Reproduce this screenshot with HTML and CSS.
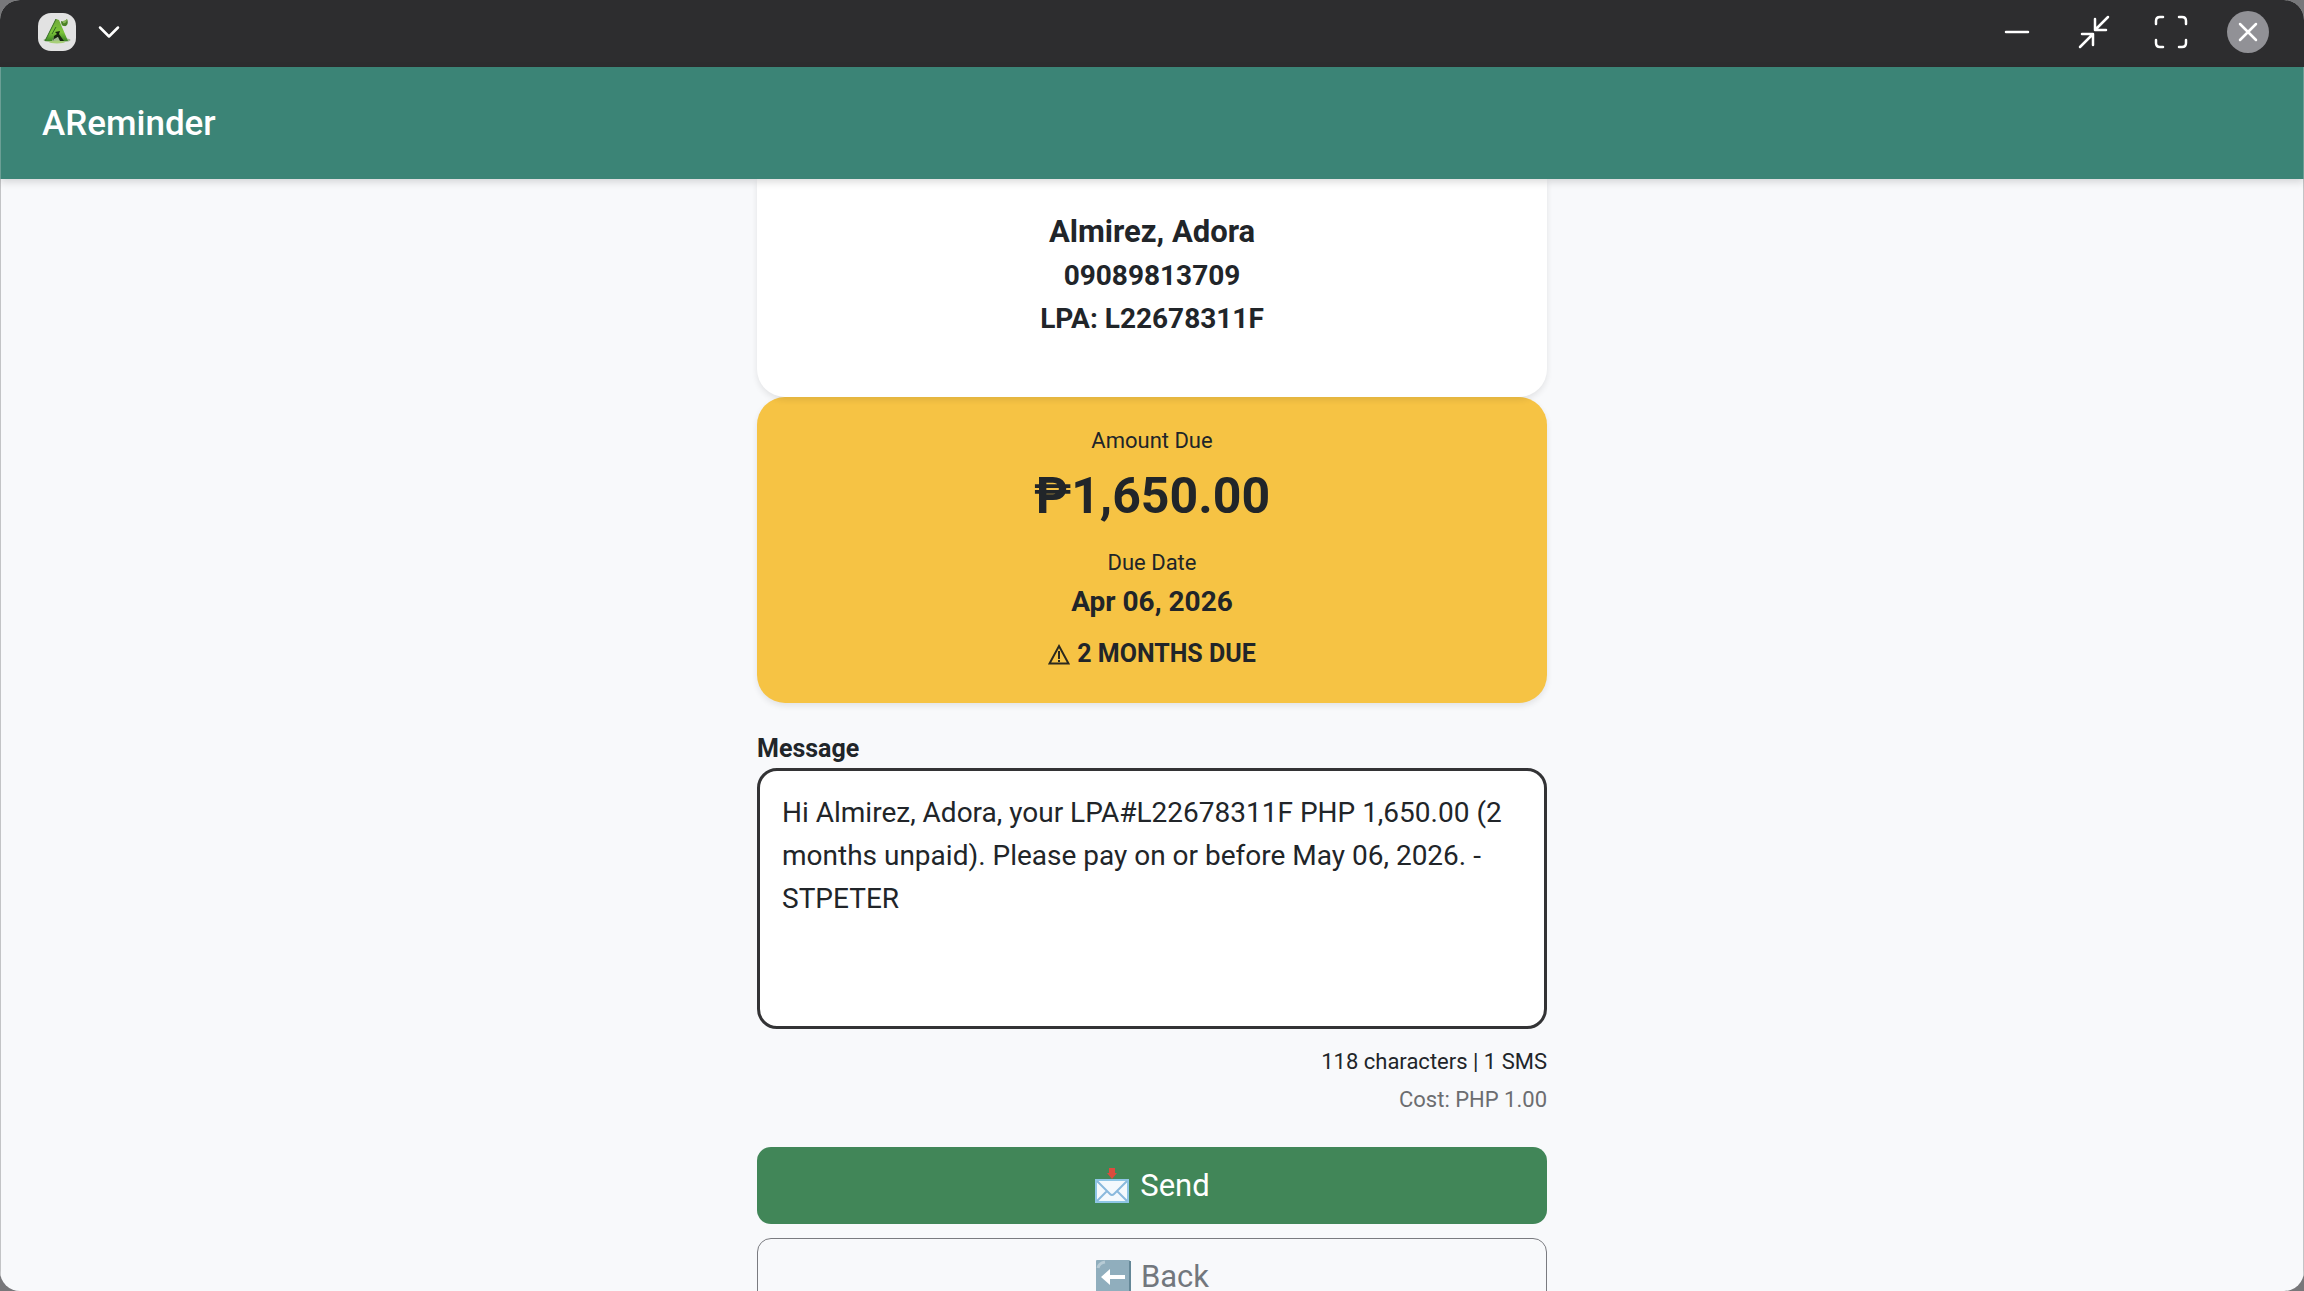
FILE: index.html
```html
<!DOCTYPE html>
<html lang="en">
<head>
<meta charset="utf-8">
<meta name="viewport" content="width=device-width, initial-scale=1">
<title>AReminder</title>
<link rel="stylesheet" href="styles.css">
</head>
<body>
<div class="window">
  <header class="titlebar">
    <div class="titlebar-group titlebar-app">
      <svg class="app-logo" viewBox="0 0 38 38" aria-hidden="true">
        <defs>
          <linearGradient id="leaf" x1="0" y1="0" x2="0" y2="1">
            <stop offset="0" stop-color="#6fa83a"/>
            <stop offset=".6" stop-color="#7cc63a"/>
            <stop offset="1" stop-color="#3d8526"/>
          </linearGradient>
        </defs>
        <rect width="38" height="38" rx="13" fill="#e2e2e2"/>
        <ellipse cx="19" cy="27" rx="13.500" ry="2.500" fill="#9fb98f"/>
        <ellipse cx="19" cy="29" rx="8" ry="1.500" fill="#a8cf78"/>
        <path d="M18 6 21 7 30 28H23L21 23 16 24 14 28H7Z" fill="url(#leaf)"/>
        <path d="M18 6 7 28M18 14 14 21" stroke="#326b22" stroke-width="1" fill="none"/>
        <path d="M17 19 22 18 21 21 26 28H22L20 24 16 26 15 28 16 23 19 21Z" fill="#16260f"/>
        <path d="M23 8C25 9 27 8 29 6 31 10 29 14 26 13 24 13 23 11 23 8Z" fill="#4b8126"/>
        <path d="M25 8C26 8 28 7 29 6 29 9 27 11 25 10Z" fill="#8ab75a"/>
      </svg>
      <button class="icon-button" type="button" aria-label="Window menu">
        <svg width="28" height="28" viewBox="0 0 28 28"><path d="M5 9.500 14 18.500 23 9.500"/></svg>
      </button>
    </div>
    <div class="titlebar-group titlebar-controls">
      <button class="icon-button" type="button" aria-label="Minimize">
        <svg width="42" height="42" viewBox="0 0 42 42"><path d="M10 21H32"/></svg>
      </button>
      <button class="icon-button" type="button" aria-label="Restore down">
        <svg width="42" height="42" viewBox="0 0 42 42"><path d="M35 6 22 19M22 8V19H33M7 36 20 23M9 23H20V34"/></svg>
      </button>
      <button class="icon-button" type="button" aria-label="Full screen">
        <svg width="42" height="42" viewBox="0 0 42 42"><path d="M6 13V10Q6 6 10 6H13M29 6H32Q36 6 36 10V13M36 29V32Q36 36 32 36H29M13 36H10Q6 36 6 32V29"/></svg>
      </button>
      <button class="icon-button close-button" type="button" aria-label="Close">
        <svg width="42" height="42" viewBox="0 0 42 42"><path d="M13 13 29 29M29 13 13 29"/></svg>
      </button>
    </div>
  </header>

  <div class="navbar"><a class="brand" href="#">AReminder</a></div>

  <main class="content">
    <div class="column">
      <section class="card client-card">
        <h1 class="client-name">Almirez, Adora</h1>
        <p class="client-line">09089813709</p>
        <p class="client-line">LPA: L22678311F</p>
      </section>

      <section class="card due-card">
        <p class="due-label">Amount Due</p>
        <p class="due-amount">₱1,650.00</p>
        <p class="due-label">Due Date</p>
        <p class="due-date">Apr 06, 2026</p>
        <p class="due-status">
          <svg class="warning" width="22" height="22" viewBox="0 0 22 22" aria-hidden="true"><path d="M11 3 20.500 20.500H1.500Z" /><path d="M11 8V16M11 17V19"/></svg>
          2 MONTHS DUE
        </p>
      </section>

      <form class="message-form">
        <label class="message-label" for="message">Message</label>
        <textarea class="message-box" id="message" rows="5" spellcheck="false">Hi Almirez, Adora, your LPA#L22678311F PHP 1,650.00 (2 months unpaid). Please pay on or before May 06, 2026. -STPETER</textarea>
        <div class="message-meta">
          <p>118 characters | 1 SMS</p>
          <p class="cost">Cost: PHP 1.00</p>
        </div>
        <div class="actions">
          <button class="action send" type="button">
            <svg width="36" height="36" viewBox="0 0 36 36" aria-hidden="true">
              <rect x="2" y="12" width="32" height="22" fill="#f4f9fd" stroke="#8fc6e6" stroke-width="2"/>
              <path d="M3 33 13 23M33 33 23 23M3 13 16 26Q18 28 20 26L33 13" fill="none" stroke="#8ab9dd" stroke-width="2"/>
              <path d="M15 0H21V5H23L18 11 13 5H15Z" fill="#dc4b3e"/>
            </svg>
            Send
          </button>
          <button class="action back" type="button">
            <svg width="36" height="36" viewBox="0 0 36 36" aria-hidden="true">
              <rect x="1" y="1" width="34" height="34" rx="1" fill="#90aebd"/>
              <path d="M35 2V35H2" fill="none" stroke="#648797" stroke-width="2"/>
              <path d="M3 9Q4 4 10 3" fill="none" stroke="#b7cbd5" stroke-width="3"/>
              <path d="M6 18 15 10V16H30V20H15V26Z" fill="#fff"/>
            </svg>
            Back
          </button>
        </div>
      </form>
    </div>
  </main>
</div>
</body>
</html>
```
FILE: styles.css
```css
* {
  box-sizing: border-box;
}

body {
  margin: 0;
  background: #77777a;
  color: #212529;
  font-family: Roboto, "Liberation Sans", sans-serif;
}

h1,
p {
  margin: 0;
}

.window {
  display: flex;
  flex-direction: column;
  height: 100vh;
  overflow: hidden;
  border-radius: 20px;
  background: #f8f9fb;
}

/* Window title bar */
.titlebar {
  display: flex;
  flex: none;
  align-items: center;
  justify-content: space-between;
  height: 67px;
  padding: 0 35px 3px 38px;
  background: #2d2d2f;
}

.titlebar-group {
  display: flex;
  align-items: center;
}

.titlebar-app {
  gap: 19px;
}

.titlebar-controls {
  gap: 35px;
}

.app-logo {
  width: 38px;
  height: 38px;
}

.icon-button {
  display: flex;
  padding: 0;
  border: 0;
  background: none;
}

.icon-button svg {
  fill: none;
  stroke: #fff;
  stroke-width: 2.5;
  stroke-linecap: round;
  stroke-linejoin: round;
}

.close-button {
  border-radius: 50%;
  background: #919196;
}

/* App bar */
.navbar {
  position: relative;
  z-index: 2;
  display: flex;
  flex: none;
  align-items: center;
  height: 112px;
  padding: 0 41px;
  border: solid #6b9f95;
  border-width: 0 1px;
  background: #3b8476;
  box-shadow: 0 3px 8px rgba(0, 0, 0, .15);
}

.brand {
  color: #fff;
  font-size: 35px;
  font-weight: 500;
  text-decoration: none;
}

/* Scrollable content */
.content {
  flex: 1;
  min-height: 0;
  overflow: hidden;
  border: solid #c3c4c6;
  border-width: 0 1px;
}

.column {
  width: 100%;
  max-width: 790px;
  margin: 0 auto;
}

.card {
  box-shadow: 0 3px 6px rgba(0, 0, 0, .09);
  text-align: center;
}

.client-card {
  position: relative;
  z-index: 1;
  padding: 30px 24px 57px;
  border-radius: 0 0 28px 28px;
  background: #fff;
}

.client-name {
  font-size: 31px;
  line-height: 45px;
}

.client-line,
.due-date {
  font-size: 28px;
  font-weight: 700;
  line-height: 43px;
}

.due-card {
  padding: 27px 24px 30px;
  border-radius: 28px;
  background: #f6c344;
}

.due-label {
  font-size: 22px;
  line-height: 34px;
}

.due-amount {
  margin: 8px 0 20px;
  font-size: 50px;
  font-weight: 700;
  line-height: 60px;
}

.due-status {
  display: flex;
  align-items: center;
  justify-content: center;
  gap: 7px;
  margin-top: 12px;
  font-size: 25px;
  font-weight: 700;
  line-height: 38px;
}

.warning {
  fill: none;
  stroke: #2b291e;
  stroke-width: 2;
}

/* Message form */
.message-label {
  display: block;
  margin-top: 26px;
  font-size: 25px;
  font-weight: 700;
  line-height: 39px;
}

.message-box {
  display: block;
  width: 100%;
  height: 261px;
  padding: 20px 22px;
  border: 3px solid #333335;
  border-radius: 20px;
  outline: 0;
  background: #fff;
  color: #212529;
  font: 28px/43px Roboto, "Liberation Sans", sans-serif;
  resize: none;
}

.message-meta {
  margin-top: 14px;
  font-size: 22px;
  line-height: 38px;
  text-align: right;
}

.cost {
  color: #6c6d70;
}

.actions {
  display: grid;
  gap: 14px;
  margin-top: 28px;
}

.action {
  display: flex;
  align-items: center;
  justify-content: center;
  gap: 10px;
  height: 77px;
  border: 0;
  border-radius: 14px;
  font: 31px/46px Roboto, "Liberation Sans", sans-serif;
}

.send {
  background: #418658;
  color: #fff;
}

.back {
  border: 1px solid #7a7b80;
  background: transparent;
  color: #72777d;
}
```
